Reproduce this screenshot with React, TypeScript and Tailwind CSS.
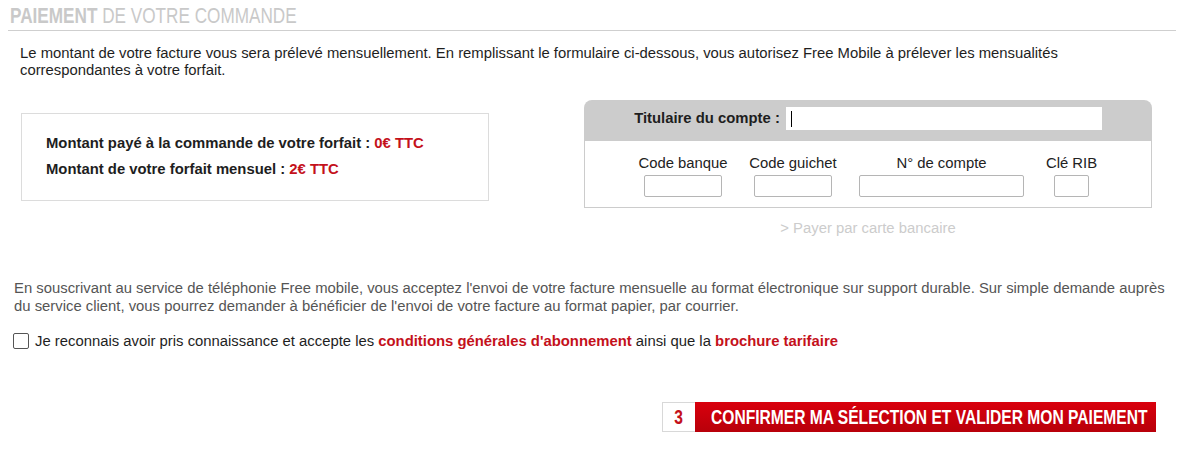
import * as React from 'react';

const RED = 'text-[#c4111b]';

const Narrow: React.FC<{ className?: string; children: React.ReactNode }> = ({ className = '', children }) => (
    <span className={`inline-block scale-x-[0.78] whitespace-nowrap ${className}`}>{children}</span>
);

const Field: React.FC<{ label: string; colWidth: string; inputWidth: string }> = ({ label, colWidth, inputWidth }) => (
    <div className={`flex flex-col items-center ${colWidth}`}>
        <span className="whitespace-nowrap text-[14.85px] leading-[17px] text-[#222]">{label}</span>
        <div className={`mt-[3px] h-[22px] rounded-[2px] border border-[#b5b5b5] bg-white ${inputWidth}`} />
    </div>
);

export default function App() {
    return (
        <div className="h-[450px] w-[1200px] bg-white font-['Liberation_Sans',Arial,sans-serif] text-[#1e1e1e]">
            <div className="ml-2 w-[1168px] pt-[5px]">
                {/* titre de la section */}
                <div className="h-[26px] border-b border-[#cfcfcf] pl-[2px]">
                    <Narrow className="origin-left text-[22px] leading-[22px] text-[#c9c9c9]">
                        <span className="font-bold">PAIEMENT</span> DE VOTRE COMMANDE
                    </Narrow>
                </div>

                <p className="mt-[14px] pl-3 text-[14.85px] leading-[17px]">
                    Le montant de votre facture vous sera prélevé mensuellement. En remplissant le formulaire ci-dessous, vous autorisez Free Mobile à prélever les mensualités
                    <br />
                    correspondantes à votre forfait.
                </p>

                <div className="mt-[21px] flex items-start">
                    <div className="ml-[13px] mt-[13px] h-[88px] w-[468px] border border-[#dcdcdc] pl-[24px] pt-[16px] text-[14.85px] font-bold leading-[26px]">
                        <div>
                            Montant payé à la commande de votre forfait : <span className={RED}>0€ TTC</span>
                        </div>
                        <div>
                            Montant de votre forfait mensuel : <span className={RED}>2€ TTC</span>
                        </div>
                    </div>

                    <div className="ml-[95px] flex w-[568px] flex-col items-center">
                        <div className="w-full">
                            <div className="flex h-[41px] items-start justify-center gap-[6px] rounded-t-[8px] bg-[#cccccc] pt-[7px]">
                                <span className="pt-[3px] text-[14.85px] font-bold leading-[17px] text-[#1e1e1e]">Titulaire du compte :</span>
                                <div className="flex h-[23px] w-[316px] items-center bg-white pl-[5px]">
                                    <span className="h-[16px] w-px bg-black" />
                                </div>
                            </div>
                            <div className="flex h-[67px] justify-center gap-[22px] border border-t-0 border-[#cccccc] pt-[14px]">
                                <Field label="Code banque" colWidth="w-[88px]" inputWidth="w-[78px]" />
                                <Field label="Code guichet" colWidth="w-[88px]" inputWidth="w-[78px]" />
                                <Field label="N° de compte" colWidth="w-[165px]" inputWidth="w-[165px]" />
                                <Field label="Clé RIB" colWidth="w-[51px]" inputWidth="w-[35px]" />
                            </div>
                        </div>
                        <a className="mt-[12px] text-[14.85px] leading-[17px] text-[#cccccc]">&gt; Payer par carte bancaire</a>
                    </div>
                </div>

                <p className="mt-[42px] pl-[6px] text-[14.85px] leading-[18px] text-[#555555]">
                    En souscrivant au service de téléphonie Free mobile, vous acceptez l'envoi de votre facture mensuelle au format électronique sur support durable. Sur simple demande auprès
                    <br />
                    du service client, vous pourrez demander à bénéficier de l'envoi de votre facture au format papier, par courrier.
                </p>

                <label className="mt-[17px] flex items-center pl-[5px] text-[14.85px] leading-[18px]">
                    <span className="h-[16px] w-[16px] shrink-0 rounded-[2px] border border-[#555] bg-white" />
                    <span className="ml-[6px] whitespace-nowrap">
                        Je reconnais avoir pris connaissance et accepte les{' '}
                        <span className={`font-bold ${RED}`}>conditions générales d'abonnement</span> ainsi que la{' '}
                        <span className={`font-bold ${RED}`}>brochure tarifaire</span>
                    </span>
                </label>

                <div className="ml-[654px] mt-[52px] flex h-[30px] w-[494px]">
                    <div className={`flex w-[33px] shrink-0 items-center justify-center border border-r-0 border-[#d8d8d8] bg-white text-[20px] font-bold ${RED}`}>
                        <Narrow className="origin-center">3</Narrow>
                    </div>
                    <div className="flex min-w-0 flex-1 items-center overflow-hidden bg-gradient-to-b from-[#d9000d] to-[#b8000a] pl-[16px] text-[20px] font-bold text-white">
                        <Narrow className="origin-left">CONFIRMER MA SÉLECTION ET VALIDER MON PAIEMENT</Narrow>
                    </div>
                </div>
            </div>
        </div>
    );
}
